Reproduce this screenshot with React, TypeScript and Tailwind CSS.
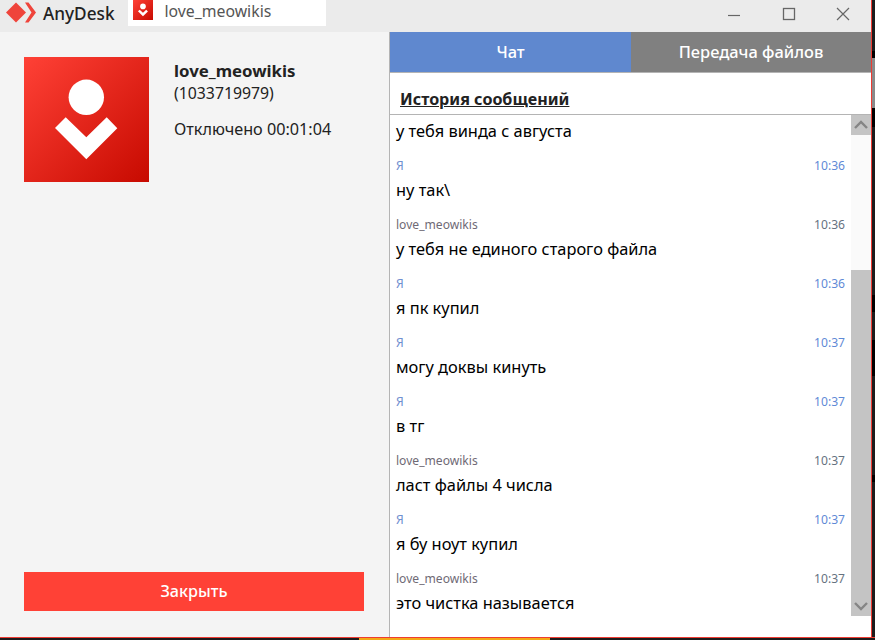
import { FC } from 'react';

const font = { fontFamily: '"Noto Sans", sans-serif' };

type Msg = { from: 'me' | 'peer'; time: string; text: string };

const messages: Msg[] = [
  { from: 'me', time: '10:36', text: 'ну так\\' },
  { from: 'peer', time: '10:36', text: 'у тебя не единого старого файла' },
  { from: 'me', time: '10:36', text: 'я пк купил' },
  { from: 'me', time: '10:37', text: 'могу доквы кинуть' },
  { from: 'me', time: '10:37', text: 'в тг' },
  { from: 'peer', time: '10:37', text: 'ласт файлы 4 числа' },
  { from: 'me', time: '10:37', text: 'я бу ноут купил' },
  { from: 'peer', time: '10:37', text: 'это чистка называется' },
];

const Avatar: FC<{ size: number }> = ({ size }) => (
  <svg width={size} height={size} viewBox="0 0 125 125" className="block shrink-0">
    <defs>
      <linearGradient id={`av${size}`} x1="0" y1="0" x2="1" y2="1">
        <stop offset="0" stopColor="#ff4136" />
        <stop offset="1" stopColor="#c70a00" />
      </linearGradient>
    </defs>
    <rect width="125" height="125" fill={`url(#av${size})`} />
    <circle cx="62.300" cy="40.300" r="17.700" fill="#fff" />
    <path d="M31 71 L41.700 60.300 L62.300 80.300 L82.700 60.300 L93.300 71.300 L62.300 102.300 Z" fill="#fff" />
  </svg>
);

const Logo: FC = () => (
  <svg width="30" height="21" viewBox="0 0 30 21" className="block">
    <path d="M0 10.500 L10 0.500 L20 10.500 L10 20.500 Z" fill="#ef443b" />
    <path d="M19 0.500 L22.500 0.500 L30 10.500 L22.500 20.500 L19 20.500 L25.500 10.500 Z" fill="#ef443b" />
  </svg>
);

const Message: FC<{ m: Msg }> = ({ m }) => (
  <div className="h-[59px]">
    <div className="flex h-[32px] items-end justify-between text-[12.100px] leading-[17px]">
      <span className={m.from === 'me' ? 'text-[#6f8fd0]' : 'text-[#6f6a75]'}>
        {m.from === 'me' ? 'Я' : 'love_meowikis'}
      </span>
      <span className={m.from === 'me' ? 'text-[#5f8ad6]' : 'text-[#66727f]'}>{m.time}</span>
    </div>
    <p className="mt-[5px] text-[16.400px] leading-[22px] text-black">{m.text}</p>
  </div>
);

export default function App() {
  return (
    <div className="flex h-[640px] w-[875px] flex-col overflow-hidden bg-[#1c1c1c]" style={font}>
      <div className="flex h-[637px] shrink-0">
        <div className="flex w-[871px] shrink-0 flex-col bg-white">
          {/* title bar */}
          <div className="flex h-[32px] shrink-0 items-start bg-[#ebebeb]">
            <div className="ml-[6px] mt-[2px]">
              <Logo />
            </div>
            <span className="ml-[7px] mt-[2px] text-[17.200px] font-medium leading-[24px] text-[#222]">AnyDesk</span>
            <div className="ml-[13px] flex h-[26px] w-[198px] items-start bg-white pl-[5px]">
              <Avatar size={20} />
              <span className="ml-[12px] text-[15.800px] leading-[22px] text-[#555]">love_meowikis</span>
            </div>
            <div className="ml-auto flex h-full items-center">
              <svg width="14" height="14" viewBox="0 0 14 14" className="mr-[41px] mb-[5px]">
                <path d="M1 8.500 H13" stroke="#666" strokeWidth="1.200" />
              </svg>
              <svg width="14" height="14" viewBox="0 0 14 14" className="mr-[40px] mb-[5px]">
                <rect x="1.500" y="1.500" width="11" height="11" fill="none" stroke="#666" strokeWidth="1.300" />
              </svg>
              <svg width="14" height="14" viewBox="0 0 14 14" className="mr-[21px] mb-[5px]">
                <path d="M1 1 L13 13 M13 1 L1 13" stroke="#666" strokeWidth="1.200" />
              </svg>
            </div>
          </div>

          <div className="flex min-h-0 flex-1">
            {/* left panel */}
            <div className="flex w-[390px] shrink-0 flex-col border-r border-[#b4b4b4] bg-[#f4f4f4] pl-[24px] pr-[25px] pt-[25px] pb-[26px]">
              <div className="flex">
                <Avatar size={125} />
                <div className="ml-[25px] pt-[2px] text-[#222]">
                  <div className="text-[16.800px] font-bold leading-[23px]">love_meowikis</div>
                  <div className="text-[15.800px] leading-[22px]">(1033719979)</div>
                  <div className="mt-[14px] text-[16.200px] leading-[22px]">Отключено 00:01:04</div>
                </div>
              </div>
              <button className="mt-auto h-[39px] w-[340px] bg-[#ff4136] text-[16.200px] font-medium text-white">
                Закрыть
              </button>
            </div>

            {/* chat */}
            <div className="flex min-w-0 flex-1 flex-col">
              <div className="flex h-[41px] shrink-0 border-b border-[#b4b4b4] text-[16.400px] font-medium text-white">
                <div className="flex w-[241px] items-center justify-center bg-[#5f88cf]">Чат</div>
                <div className="flex flex-1 items-center justify-center bg-[#808080]">Передача файлов</div>
              </div>
              <div className="h-[42px] shrink-0 border-b border-[#b4b4b4] pl-[10px] pt-[14px]">
                <span className="text-[16.100px] font-bold leading-[22px] text-[#222] underline">История сообщений</span>
              </div>
              <div className="flex min-h-0 flex-1">
                <div className="min-w-0 flex-1 pl-[6px] pr-[6px]">
                  <p className="mt-[5px] h-[22px] text-[16.400px] leading-[22px] text-black">у тебя винда с августа</p>
                  {messages.map((m, i) => (
                    <Message key={i} m={m} />
                  ))}
                </div>
                <div className="flex h-[501px] w-[20px] shrink-0 flex-col bg-[#fafafa]">
                  <div className="flex h-[20px] items-center justify-center bg-[#c4c4c4]">
                    <svg width="16" height="10" viewBox="0 0 16 10">
                      <path d="M2 8 L8 2 L14 8" fill="none" stroke="#858585" strokeWidth="2.400" />
                    </svg>
                  </div>
                  <div className="h-[135px]" />
                  <div className="flex-1 bg-[#c4c4c4]" />
                  <div className="flex h-[20px] items-center justify-center bg-[#c4c4c4]">
                    <svg width="16" height="10" viewBox="0 0 16 10">
                      <path d="M2 2 L8 8 L14 2" fill="none" stroke="#858585" strokeWidth="2.400" />
                    </svg>
                  </div>
                </div>
              </div>
            </div>
          </div>
        </div>
        {/* what shows behind the window */}
        <div className="flex w-[4px] shrink-0 flex-col border-l border-[#ef3b32]">
          <div className="h-[51px] bg-[#1c1c1c]" />
          <div className="h-[7px] bg-black" />
          <div className="h-[50px] bg-[#8a8a8a]" />
          <div className="h-[19px] bg-black" />
          <div className="h-[168px] bg-[#1c1c1c]" />
          <div className="h-[17px] bg-black" />
          <div className="h-[28px] bg-[#1c1c1c]" />
          <div className="h-[36px] bg-black" />
          <div className="h-[99px] bg-[#1c1c1c]" />
          <div className="h-[7px] bg-black" />
          <div className="flex-1 bg-[#1c1c1c]" />
        </div>
      </div>
      <div className="flex h-[3px] shrink-0 flex-col">
        <div className="h-px bg-[#ef3b32]" />
        <div className="flex flex-1">
          <div className="w-[359px] bg-[#1c1c1c]" />
          <div className="w-[191px] bg-[#f2a916]" />
          <div className="flex-1 bg-[#1c1c1c]" />
        </div>
      </div>
    </div>
  );
}
